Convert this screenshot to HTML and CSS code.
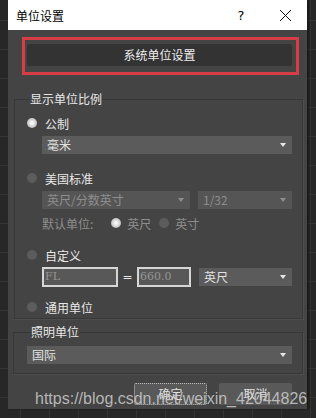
FILE: index.html
```html
<!DOCTYPE html>
<html lang="zh-CN">

<head>
  <meta charset="UTF-8">
  <title>单位设置</title>
  <link rel="stylesheet" href="styles.css">
</head>

<body>
  <div class="dialog">
    <div class="titlebar">
      <span class="title">单位设置</span>
      <span class="title-btn help">?</span>
      <span class="title-btn close">
        <svg width="13" height="13" viewBox="0 0 13 13">
          <path d="M1 1L12 12M12 1L1 12" stroke="#111" stroke-width="1" />
        </svg>
      </span>
    </div>

    <div class="highlight">
      <div class="system-btn">系统单位设置</div>
    </div>

    <fieldset class="group scale-group">
      <legend>显示单位比例</legend>

      <div class="radio-row">
        <span class="radio on"></span><span>公制</span>
      </div>
      <div class="sub">
        <div class="select">毫米<span class="arrow"></span></div>
      </div>

      <div class="radio-row gap-big">
        <span class="radio"></span><span>美国标准</span>
      </div>
      <div class="sub split">
        <div class="select disabled wide">英尺/分数英寸<span class="arrow"></span></div>
        <div class="select disabled grow">1/32<span class="arrow"></span></div>
      </div>
      <div class="sub default-unit">
        <span class="dim">默认单位:</span>
        <span class="radio on"></span><span class="dim">英尺</span>
        <span class="radio second"></span><span class="dim">英寸</span>
      </div>

      <div class="radio-row gap-big">
        <span class="radio"></span><span>自定义</span>
      </div>
      <div class="sub custom">
        <div class="field field-name">FL</div>
        <span class="equals">=</span>
        <div class="field field-value">660.0</div>
        <div class="select grow">英尺<span class="arrow"></span></div>
      </div>

      <div class="radio-row gap-mid">
        <span class="radio"></span><span>通用单位</span>
      </div>
    </fieldset>

    <fieldset class="group light-group">
      <legend>照明单位</legend>
      <div class="select">国际<span class="arrow"></span></div>
    </fieldset>

    <div class="actions">
      <div class="btn focused">确定</div>
      <div class="btn">取消</div>
    </div>
  </div>

  <div class="watermark">https://blog.csdn.net/weixin_42044826</div>
</body>

</html>
```

FILE: styles.css
```css
body {
  margin: 0;
  height: 418px;
  overflow: hidden;
  position: relative;
  font-family: "Noto Sans CJK SC", "Noto Sans", sans-serif;
  font-size: 12px;
  background-color: #272727;
  background-image:
    linear-gradient(90deg, #343434 1px, transparent 1px),
    linear-gradient(#343434 1px, transparent 1px);
  background-size: 29px 29px;
  background-position: 20px 20px;
}

.dialog {
  width: 299px;
  margin-left: 8px;
  background: #444444;
  padding-bottom: 4px;
  box-shadow: 2px 0 2px rgba(0, 0, 0, 0.35);
}

.titlebar {
  height: 30px;
  display: flex;
  align-items: center;
  background: #ffffff;
  color: #000;
  padding-left: 8px;
}

.title {
  flex-grow: 1;
  font-size: 12px;
}

.title-btn {
  width: 44px;
  height: 30px;
  display: flex;
  align-items: center;
  justify-content: center;
}

.help {
  font-family: "DejaVu Sans", sans-serif;
  font-size: 13px;
}

.highlight {
  margin: 7px 8px 0 14px;
  border: 3px solid #d63d44;
  padding: 4px 4px 6px 2px;
}

.system-btn {
  height: 22px;
  line-height: 22px;
  background: #333333;
  border-radius: 2px;
  text-align: center;
  color: #eeeeee;
}

.group {
  border: 1px solid #383838;
  box-shadow: 1px 1px 0 #4d4d4d;
  color: #e8e8e8;
}

.group legend {
  padding: 0;
  margin-left: 3px;
  line-height: 14px;
}

.scale-group {
  margin: 17px 4px 0 6px;
  padding: 9px 10px 3px 12px;
}

.light-group {
  margin: 6px 4px 0 5px;
  padding: 7px 10px 9px 13px;
}

.light-group legend {
  margin-left: 4px;
}

.radio-row {
  display: flex;
  align-items: center;
  height: 16px;
  gap: 8px;
}

.gap-big {
  margin-top: 16px;
}

.gap-mid {
  margin-top: 12px;
}

.radio {
  width: 10px;
  height: 10px;
  border-radius: 50%;
  background: #5c5c5c;
  flex-shrink: 0;
}

.radio.on {
  background: radial-gradient(circle, #ffffff 0, #e4e4e4 35%, #9a9a9a 100%);
}

.sub {
  margin-left: 15px;
  margin-top: 5px;
}

.select {
  position: relative;
  height: 18px;
  line-height: 18px;
  background: #5b5b5b;
  color: #e2e2e2;
  padding-left: 5px;
  box-sizing: border-box;
}

.select .arrow {
  position: absolute;
  right: 6px;
  top: 7px;
  border-left: 3px solid transparent;
  border-right: 3px solid transparent;
  border-top: 4px solid #e8e8e8;
}

.select.disabled {
  background: #555555;
  color: #8e8e8e;
}

.select.disabled .arrow {
  border-top-color: #8e8e8e;
}

.split {
  display: flex;
  gap: 8px;
}

.wide {
  width: 148px;
}

.grow {
  flex-grow: 1;
}

.default-unit {
  display: flex;
  align-items: center;
  height: 16px;
  margin-top: 6px;
}

.dim {
  color: #8e8e8e;
}

.default-unit .radio {
  margin-left: 18px;
  margin-right: 6px;
}

.default-unit .radio.second {
  margin-left: 8px;
}

.custom {
  display: flex;
  align-items: center;
  margin-top: 4px;
  height: 20px;
}

.field {
  height: 20px;
  line-height: 16px;
  box-sizing: border-box;
  border: 2px solid #d6d6d6;
  background: #585858;
  color: #959595;
  font-family: "DejaVu Serif", serif;
  font-size: 11px;
  padding-left: 1px;
}

.field-name {
  width: 76px;
}

.field-value {
  width: 54px;
}

.equals {
  width: 19px;
  text-align: center;
  color: #e8e8e8;
  font-family: "DejaVu Sans", sans-serif;
}

.custom .select {
  margin-left: 8px;
}

.actions {
  display: flex;
  justify-content: flex-end;
  gap: 12px;
  padding-right: 15px;
  margin-top: 9px;
}

.btn {
  width: 73px;
  height: 22px;
  line-height: 22px;
  box-sizing: border-box;
  text-align: center;
  background: #595959;
  color: #e0e0e0;
  border-radius: 2px;
}

.btn.focused {
  border: 1px dotted #bdbdbd;
  line-height: 20px;
}

.watermark {
  position: absolute;
  left: 35px;
  top: 390px;
  font-family: "Liberation Sans", Arial, sans-serif;
  font-size: 16px;
  line-height: 18px;
  color: rgba(205, 205, 205, 0.85);
}
```
